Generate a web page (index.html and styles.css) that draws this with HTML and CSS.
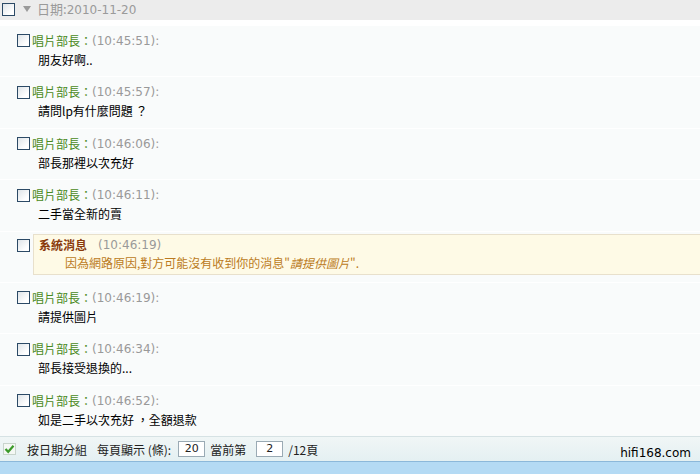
FILE: index.html
```html
<!DOCTYPE html>
<html lang="zh-Hant">
  <head>
    <meta charset="UTF-8" />
    <title>聊天記錄</title>
    <link rel="stylesheet" href="styles.css">
  </head>
  <body>
    <div class="log">
      <div class="day-head">
        <span class="chk"></span>
        <span class="arrow"></span>
        <span class="day-title">日期:<span class="num">2010-11-20</span></span>
      </div>

      <div class="msgs">
        <div class="msg">
          <div class="msg-head"><span class="chk"></span><span class="who">唱片部長：</span><span class="time">(10:45:51):</span></div>
          <div class="msg-text">朋友好啊..</div>
        </div>
        <div class="msg">
          <div class="msg-head"><span class="chk"></span><span class="who">唱片部長：</span><span class="time">(10:45:57):</span></div>
          <div class="msg-text">請問lp有什麼問題 ？</div>
        </div>
        <div class="msg">
          <div class="msg-head"><span class="chk"></span><span class="who">唱片部長：</span><span class="time">(10:46:06):</span></div>
          <div class="msg-text">部長那裡以次充好</div>
        </div>
        <div class="msg">
          <div class="msg-head"><span class="chk"></span><span class="who">唱片部長：</span><span class="time">(10:46:11):</span></div>
          <div class="msg-text">二手當全新的賣</div>
        </div>
        <div class="msg sys">
          <span class="chk"></span>
          <div class="sys-box">
            <div class="sys-head"><span class="sys-title">系統消息</span><span class="time">(10:46:19)</span></div>
            <div class="sys-text">因為網路原因,對方可能沒有收到你的消息"<em>請提供圖片</em>".</div>
          </div>
        </div>
        <div class="msg">
          <div class="msg-head"><span class="chk"></span><span class="who">唱片部長：</span><span class="time">(10:46:19):</span></div>
          <div class="msg-text">請提供圖片</div>
        </div>
        <div class="msg">
          <div class="msg-head"><span class="chk"></span><span class="who">唱片部長：</span><span class="time">(10:46:34):</span></div>
          <div class="msg-text">部長接受退換的...</div>
        </div>
        <div class="msg">
          <div class="msg-head"><span class="chk"></span><span class="who">唱片部長：</span><span class="time">(10:46:52):</span></div>
          <div class="msg-text">如是二手以次充好 ，全額退款</div>
        </div>
      </div>

      <div class="footer">
        <svg class="tick" width="13" height="12" viewBox="0 0 13 12">
          <rect x="0.5" y="0.5" width="12" height="11" fill="#f4f8f4" stroke="#c8d4cc" />
          <path d="M2.5 6 L5.2 8.8 L10.5 2.8" fill="none" stroke="#3a9a2a" stroke-width="2.2" />
        </svg>
        <span class="group-by">按日期分組</span>
        <span>每頁顯示 (條):</span>
        <span class="box box-wide">20</span>
        <span>當前第</span>
        <span class="box box-page">2</span>
        <span>/12頁</span>
        <span class="mark">hifi168.com</span>
      </div>
      <div class="status"></div>
    </div>
  </body>
</html>
```

FILE: styles.css
```css
body {
  margin: 0;
  background: #fff;
  font-family: "Noto Sans CJK TC", "Noto Sans CJK SC", sans-serif;
  font-size: 12px;
  color: #000;
}

.log {
  width: 700px;
  height: 474px;
  display: flex;
  flex-direction: column;
  overflow: hidden;
}

.chk {
  display: inline-block;
  flex: none;
  width: 11px;
  height: 11px;
  border: 1px solid #2c4a66;
  background: linear-gradient(135deg, #dfe4e8, #ffffff 75%);
}

.day-head {
  height: 20px;
  background: #ececec;
  display: flex;
  align-items: center;
  padding-left: 2px;
}

.arrow {
  width: 0;
  height: 0;
  border-left: 4px solid transparent;
  border-right: 4px solid transparent;
  border-top: 6px solid #9a9a9a;
  margin: 0 6px 2px 8px;
}

.day-title {
  color: #9a9a9a;
  font-size: 13px;
  line-height: 16px;
}

.num {
  font-family: "DejaVu Sans", sans-serif;
  font-size: 12px;
}

.msgs {
  flex: 1;
  padding-top: 6px;
  display: flex;
  flex-direction: column;
  gap: 1px;
}

.msg {
  height: 50.4px;
  flex: none;
  background: #f9fbfb;
  padding: 7px 0 0 17px;
  box-sizing: border-box;
}

.msg-head {
  display: flex;
  align-items: center;
  height: 16px;
}

.who {
  color: #4a8a22;
  margin-left: 2px;
  line-height: 16px;
}

.time {
  color: #999;
  font-family: "DejaVu Sans", sans-serif;
  font-size: 12px;
  line-height: 16px;
}

.msg-text {
  margin: 3px 0 0 21px;
  line-height: 16px;
}

.sys {
  display: flex;
  align-items: flex-start;
  padding: 2px 0 0 17px;
}

.sys .chk {
  margin-top: 5px;
}

.sys-box {
  flex: 1;
  margin-left: 3px;
  height: 41px;
  box-sizing: border-box;
  background: #fefae6;
  border: 1px solid #e8e0cc;
  border-right: none;
  padding: 2px 0 0 5px;
}

.sys-head {
  display: flex;
  gap: 11px;
  line-height: 16px;
}

.sys-title {
  color: #8a3a0c;
  font-weight: bold;
}

.sys-text {
  color: #bb7a22;
  margin: 2px 0 0 26px;
  line-height: 16px;
}

.sys-text em {
  font-style: italic;
}

.footer {
  height: 24px;
  border-top: 1px solid #d6e2e4;
  background: linear-gradient(#f0f6f6, #e4f0f2);
  display: flex;
  align-items: center;
  padding-left: 3px;
  gap: 4px;
  color: #222;
}

.tick {
  margin-right: 7px;
}

.group-by {
  margin-right: 6px;
}

.box {
  display: inline-block;
  width: 27px;
  height: 16px;
  line-height: 14px;
  background: #fff;
  border: 1px solid #9aaab4;
  text-align: center;
  font-family: "DejaVu Sans", sans-serif;
  font-size: 11px;
  box-sizing: border-box;
  margin: 0 1px 0 3px;
}

.box-page {
  margin-left: 6px;
}

.mark {
  margin-left: auto;
  margin-right: 9px;
  align-self: flex-end;
  font-family: "DejaVu Sans", sans-serif;
  font-size: 12px;
  line-height: 15px;
  color: #000;
}

.status {
  height: 12px;
  border-top: 1px solid #8cb8da;
  background: #b4daf4;
}
```
